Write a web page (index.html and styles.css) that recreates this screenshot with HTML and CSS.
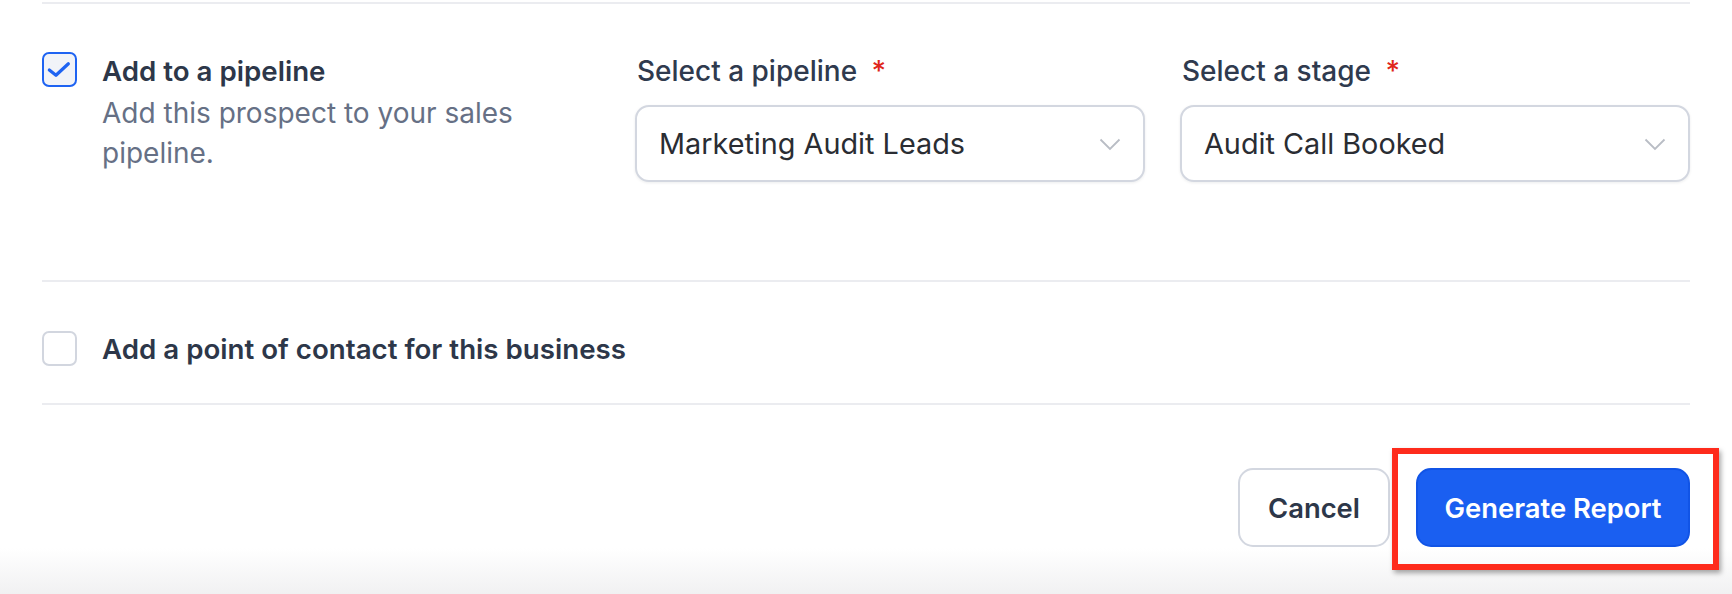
FILE: index.html
```html
<!DOCTYPE html>
<html lang="en">
<head>
<meta charset="utf-8">
<title>Generate Report</title>
<link rel="stylesheet" href="styles.css">
</head>
<body>
<div class="panel">
  <section class="section pipeline">
    <div class="option">
      <span class="checkbox checked">
        <svg viewBox="0 0 35 35" width="31" height="31"><path d="M6 18 L13.5 24 L27.5 11" fill="none" stroke="#1e63f2" stroke-width="3.6" stroke-linecap="round" stroke-linejoin="round"/></svg>
      </span>
      <div class="option-text">
        <div class="option-title">Add to a pipeline</div>
        <div class="option-desc">Add this prospect to your sales pipeline.</div>
      </div>
    </div>
    <div class="field">
      <div class="label">Select a pipeline <span class="req">*</span></div>
      <div class="select">
        <span class="select-value">Marketing Audit Leads</span>
        <svg class="chev" viewBox="0 0 22 13" width="22" height="13"><path d="M1.5 1.5 L11 11 L20.5 1.5" fill="none" stroke="#b9bdc5" stroke-width="1.8"/></svg>
      </div>
    </div>
    <div class="field">
      <div class="label">Select a stage <span class="req">*</span></div>
      <div class="select">
        <span class="select-value">Audit Call Booked</span>
        <svg class="chev" viewBox="0 0 22 13" width="22" height="13"><path d="M1.5 1.5 L11 11 L20.5 1.5" fill="none" stroke="#b9bdc5" stroke-width="1.8"/></svg>
      </div>
    </div>
  </section>
  <section class="section contact">
    <div class="option center">
      <span class="checkbox"></span>
      <div class="option-title">Add a point of contact for this business</div>
    </div>
  </section>
  <section class="section actions">
    <button class="btn btn-secondary">Cancel</button>
    <span class="highlight">
      <button class="btn btn-primary">Generate Report</button>
    </span>
  </section>
</div>
</body>
</html>
```

FILE: styles.css
```css
html, body {
  margin: 0;
  padding: 0;
}
body {
  width: 1732px;
  height: 594px;
  overflow: hidden;
  font-family: Inter, "Noto Sans", "Liberation Sans", sans-serif;
  background: linear-gradient(to bottom, #ffffff 0, #ffffff 548px, #f1f1f2 594px);
  color: #2b3547;
}
.panel {
  margin: 2px 42px 0;
}
.section {
  border-top: 2px solid #ebecf0;
}
.pipeline {
  display: grid;
  grid-template-columns: minmax(0, 1fr) 510px 510px;
  column-gap: 35px;
  padding: 50px 0 98px;
}
.option {
  display: flex;
  align-items: flex-start;
  gap: 25px;
}
.option.center {
  align-items: center;
}
.checkbox {
  flex: none;
  box-sizing: border-box;
  width: 35px;
  height: 35px;
  border: 2px solid #d2d6df;
  border-radius: 7px;
  background: #ffffff;
  display: flex;
  align-items: center;
  justify-content: center;
}
.pipeline .checkbox {
  margin-top: -2px;
}
.checkbox.checked {
  border-color: #1e63f2;
  background: #f1f3f8;
}
.option-title {
  font-size: 27.7px;
  line-height: 34px;
  font-weight: 600;
  color: #2d3749;
  white-space: nowrap;
}
.option-desc {
  margin-top: 5px;
  font-size: 28px;
  line-height: 40px;
  font-weight: 400;
  color: #667085;
}
.field {
  display: flex;
  flex-direction: column;
}
.label {
  padding-left: 2px;
  font-size: 28px;
  line-height: 34px;
  font-weight: 500;
  color: #2f3a4e;
  white-space: nowrap;
}
.req {
  color: #e0261b;
  margin-left: 7px;
}
.select {
  margin-top: 17px;
  box-sizing: border-box;
  height: 77px;
  border: 2px solid #d3d7e0;
  border-radius: 14px;
  background: #ffffff;
  box-shadow: 0 1px 3px rgba(16, 24, 40, 0.08);
  display: flex;
  align-items: center;
  justify-content: space-between;
  padding: 0 22px 0 22px;
}
.select-value {
  font-size: 28.8px;
  font-weight: 400;
  color: #2a2d33;
  white-space: nowrap;
}
.chev {
  flex: none;
  margin-top: 1px;
}
.contact {
  padding: 49px 0 37px;
}
.actions {
  display: flex;
  justify-content: flex-end;
  align-items: center;
  gap: 26px;
  padding-top: 63px;
}
.btn {
  box-sizing: border-box;
  height: 79px;
  border-radius: 15px;
  font-family: inherit;
  font-size: 27.4px;
  font-weight: 600;
  padding: 0 20px;
  display: flex;
  align-items: center;
  white-space: nowrap;
}
.btn-secondary {
  width: 152px;
  justify-content: center;
  background: #ffffff;
  border: 2px solid #d3d7e0;
  color: #2d3749;
}
.btn-primary {
  width: 274px;
  justify-content: center;
  background: #1a5ff1;
  border: 2px solid #1154e6;
  color: #ffffff;
}
.highlight {
  position: relative;
  display: block;
}
.highlight::after {
  content: "";
  position: absolute;
  left: -24px;
  top: -20px;
  right: -29px;
  bottom: -23px;
  border: 6px solid #fe2b1c;
  box-shadow: 2px 3px 5px rgba(0, 0, 0, 0.35);
  pointer-events: none;
}
```
